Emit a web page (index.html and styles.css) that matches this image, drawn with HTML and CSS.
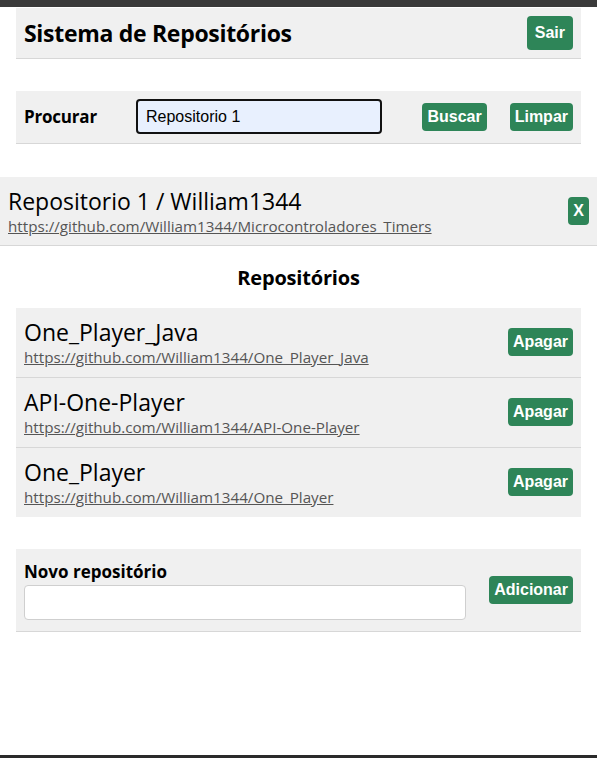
FILE: index.html
```html
<!DOCTYPE html>
<html lang="pt-BR">
<head>
<meta charset="utf-8">
<title>Sistema de Repositórios</title>
<link rel="stylesheet" href="styles.css">
</head>
<body>
<div class="topbar"></div>
<main class="page">
  <header class="box header">
    <h1 class="title">Sistema de Repositórios</h1>
    <button class="btn btn-lg">Sair</button>
  </header>

  <form class="box search">
    <label class="label search-label" for="q">Procurar</label>
    <input id="q" class="search-input" type="text" value="Repositorio 1">
    <button type="button" class="btn btn-buscar">Buscar</button>
    <button type="button" class="btn btn-limpar">Limpar</button>
  </form>

  <section class="selected">
    <div class="repo-info">
      <div class="repo-name">Repositorio 1 / William1344</div>
      <a class="repo-link" href="#">https://github.com/William1344/Microcontroladores_Timers</a>
    </div>
    <button class="btn">X</button>
  </section>

  <h2 class="list-title">Repositórios</h2>

  <ul class="repo-list">
    <li class="repo-item">
      <div class="repo-info">
        <div class="repo-name">One_Player_Java</div>
        <a class="repo-link" href="#">https://github.com/William1344/One_Player_Java</a>
      </div>
      <button class="btn">Apagar</button>
    </li>
    <li class="repo-item">
      <div class="repo-info">
        <div class="repo-name">API-One-Player</div>
        <a class="repo-link" href="#">https://github.com/William1344/API-One-Player</a>
      </div>
      <button class="btn">Apagar</button>
    </li>
    <li class="repo-item">
      <div class="repo-info">
        <div class="repo-name">One_Player</div>
        <a class="repo-link" href="#">https://github.com/William1344/One_Player</a>
      </div>
      <button class="btn">Apagar</button>
    </li>
  </ul>

  <form class="box novo">
    <div class="novo-field">
      <label class="label novo-label" for="novo">Novo repositório</label>
      <input id="novo" class="novo-input" type="text">
    </div>
    <button type="button" class="btn">Adicionar</button>
  </form>
</main>
<div class="bottombar"></div>
</body>
</html>
```

FILE: styles.css
```css
* { box-sizing: border-box; }

html, body {
  margin: 0;
  padding: 0;
  height: 100%;
}

body {
  font-family: "Open Sans", "Noto Sans", sans-serif;
  color: #000;
  background: #fff;
  display: flex;
  flex-direction: column;
  min-height: 758px;
}

.topbar {
  height: 7px;
  background: #3a3a3a;
  flex: none;
}

.bottombar {
  height: 3px;
  background: #2a2a2a;
  flex: none;
  margin-top: auto;
}

.page {
  padding-top: 1px;
}

.box {
  background: #f0f0f0;
  border-bottom: 1px solid #d7d7d7;
  margin: 0 16px;
  display: flex;
  align-items: center;
}

.btn {
  font-family: "Liberation Sans", Arial, sans-serif;
  font-weight: bold;
  font-size: 16px;
  line-height: 18px;
  color: #fff;
  background: #2e8558;
  border: none;
  border-radius: 4px;
  padding: 5px 5px;
  cursor: pointer;
  flex: none;
}

.btn-lg {
  padding: 8px;
}

.header {
  justify-content: space-between;
  padding: 8px;
  height: 51px;
}

.title {
  margin: 0;
  font-size: 23px;
  font-weight: 700;
  letter-spacing: -0.3px;
}

.search {
  margin-top: 32px;
  padding: 8px 8px 9px;
}

.label {
  font-weight: 700;
  font-size: 17px;
  letter-spacing: -0.2px;
}

.novo-label {
  letter-spacing: 0;
}

.search-label {
  width: 104px;
  margin-right: 8px;
  flex: none;
}

.search-input {
  width: 247px;
  height: 35px;
  border: 2px solid #111;
  border-radius: 4px;
  background: #e8f0fe;
  font-family: "Liberation Sans", Arial, sans-serif;
  font-size: 16px;
  padding: 0 8px;
  color: #000;
  outline: none;
}

.btn-buscar {
  margin-left: 40px;
}

.btn-limpar {
  margin-left: 23px;
}

.selected {
  margin-top: 33px;
  background: #f0f0f0;
  border-bottom: 1px solid #d7d7d7;
  display: flex;
  align-items: center;
  justify-content: space-between;
  padding: 8px 8px 9px;
  height: 69px;
}

.repo-info {
  display: flex;
  flex-direction: column;
}

.repo-name {
  font-size: 23px;
  line-height: 30px;
}

.repo-link {
  font-size: 15.2px;
  line-height: 20px;
  color: #555;
}

.list-title {
  text-align: center;
  font-size: 20px;
  font-weight: 700;
  margin: 17px 0 16px;
  line-height: 29px;
  letter-spacing: -0.2px;
}

.repo-list {
  list-style: none;
  margin: 0 16px;
  padding: 0;
  background: #f0f0f0;
}

.repo-item {
  display: flex;
  align-items: center;
  justify-content: space-between;
  padding: 9px 8px 10px;
  height: 70px;
  border-bottom: 1px solid #d7d7d7;
}

.repo-item:last-child {
  border-bottom: none;
  height: 69px;
}

.novo {
  margin-top: 32px;
  padding: 10px 8px 11px;
  height: 83px;
  justify-content: space-between;
}

.novo-field {
  display: flex;
  flex-direction: column;
  gap: 2px;
}

.novo-input {
  width: 442px;
  height: 35px;
  border: 1px solid #cfcfcf;
  border-radius: 4px;
  background: #fff;
  font-size: 16px;
  padding: 0 8px;
}
```
